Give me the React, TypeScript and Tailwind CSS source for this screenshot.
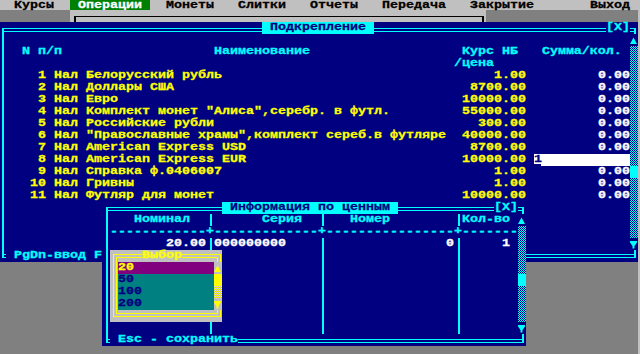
import React from 'react';

type Col = 'K' | 'N' | 'C' | 'Y' | 'W' | 'G' | 'D' | 'E' | 'P' | 'T';
type Cell = { ch: string; fg: Col; bg: Col; h?: number; cur?: boolean };

const FG: Record<Col, string> = {
  K: 'text-[#000000]',
  N: 'text-[#000080]',
  C: 'text-[#00ffff]',
  Y: 'text-[#ffff00]',
  W: 'text-[#ffffff]',
  G: 'text-[#c0c0c0]',
  D: 'text-[#808080]',
  E: 'text-[#008000]',
  P: 'text-[#800080]',
  T: 'text-[#008080]',
};
const BG: Record<Col, string> = {
  K: 'bg-[#000000]',
  N: 'bg-[#000080]',
  C: 'bg-[#00ffff]',
  Y: 'bg-[#ffff00]',
  W: 'bg-[#ffffff]',
  G: 'bg-[#c0c0c0]',
  D: 'bg-[#808080]',
  E: 'bg-[#008000]',
  P: 'bg-[#800080]',
  T: 'bg-[#008080]',
};
const FILL: Partial<Record<Col, string>> = { C: 'fill-[#00ffff]', Y: 'fill-[#ffff00]' };
const CHK: Partial<Record<Col, string>> = {
  C: 'bg-[image:repeating-conic-gradient(#00ffff_0_25%,#000080_0_50%)] bg-[length:2px_2px]',
  Y: 'bg-[image:repeating-conic-gradient(#ffff00_0_25%,#c0c0c0_0_50%)] bg-[length:2px_2px]',
};
const HL: Record<number, [string, string]> = {
  3: ['top-[3px]', 'top-[6px]'],
  4: ['top-[4px]', 'top-[7px]'],
  5: ['top-[5px]', 'top-[8px]'],
  6: ['top-[6px]', 'top-[9px]'],
};
const VDOWN: Record<number, string> = {
  3: 'top-[3px] bottom-0',
  4: 'top-[4px] bottom-0',
  5: 'top-[5px] bottom-0',
  6: 'top-[6px] bottom-0',
  7: 'top-[7px] bottom-0',
  8: 'top-[8px] bottom-0',
  9: 'top-[9px] bottom-0',
};
const VUP: Record<number, string> = {
  4: 'top-0 h-[4px]',
  5: 'top-0 h-[5px]',
  6: 'top-0 h-[6px]',
  7: 'top-0 h-[7px]',
  8: 'top-0 h-[8px]',
  9: 'top-0 h-[9px]',
  10: 'top-0 h-[10px]',
};

const BOX = new Set(['═', '│', '╒', '╕', '╘', '╛', '┌', '┐', '─', '╔', '╗', '╚', '╝', '║', '▲', '▼', '▒', '█']);

const COLS = 80;
const ROWS = 30;

const ITEMS: [string, string][] = [
  ['Белорусский рубль', '1.00'],
  ['Доллары США', '8700.00'],
  ['Евро', '10000.00'],
  ['Комплект монет "Алиса",серебр. в футл.', '55000.00'],
  ['Российские рубли', '300.00'],
  ['"Православные храмы",комплект сереб.в футляре', '40000.00'],
  ['American Express USD', '8700.00'],
  ['American Express EUR', '10000.00'],
  ['Справка ф.0406007', '1.00'],
  ['Гривны', '1.00'],
  ['Футляр для монет', '10000.00'],
];

function build(): Cell[][] {
  const s: Cell[][] = Array.from({ length: ROWS }, () =>
    Array.from({ length: COLS }, () => ({ ch: ' ', fg: 'K' as Col, bg: 'D' as Col }))
  );
  const put = (r: number, c: number, text: string, fg: Col, bg: Col, h?: number) => {
    Array.from(text).forEach((ch, i) => {
      if (c + i < COLS) s[r][c + i] = { ch, fg, bg, h };
    });
  };
  const rep = (r: number, c0: number, c1: number, ch: string, fg: Col, bg: Col, h?: number) => {
    for (let c = c0; c <= c1; c++) s[r][c] = { ch, fg, bg, h };
  };
  const box = (r0: number, c0: number, r1: number, c1: number, fg: Col, bg: Col) => {
    for (let r = r0; r <= r1; r++) for (let c = c0; c <= c1; c++) s[r][c] = { ch: ' ', fg, bg };
  };

  // menu bar
  rep(0, 0, 79, ' ', 'K', 'G');
  put(0, 2, 'Курсы', 'K', 'G');
  put(0, 9, ' Операции ', 'W', 'E');
  put(0, 21, 'Монеты', 'K', 'G');
  put(0, 30, 'Слитки', 'K', 'G');
  put(0, 39, 'Отчеты', 'K', 'G');
  put(0, 48, 'Передача', 'K', 'G');
  put(0, 59, 'Закрытие', 'K', 'G');
  put(0, 74, 'Выход', 'K', 'G');

  // window behind (top edge only)
  rep(1, 9, 9, '┌', 'K', 'G', 6);
  rep(1, 10, 59, '─', 'K', 'G', 6);
  rep(1, 60, 60, '┐', 'K', 'G', 6);

  // main window
  box(2, 0, 21, 79, 'C', 'N');
  rep(2, 0, 0, '╒', 'C', 'N', 6);
  rep(2, 1, 78, '═', 'C', 'N', 6);
  rep(2, 79, 79, '╕', 'C', 'N', 6);
  put(2, 33, ' Подкрепление ', 'N', 'C');
  put(2, 76, '[X]', 'C', 'N');
  for (let r = 3; r <= 20; r++) {
    rep(r, 0, 0, '│', 'C', 'N');
    const ch = r === 3 ? '▲' : r === 20 ? '▼' : r === 14 ? '█' : '▒';
    rep(r, 79, 79, ch, 'C', 'N');
  }
  put(4, 3, 'N п/п', 'C', 'N');
  put(4, 27, 'Наименование', 'C', 'N');
  put(4, 58, 'Курс НБ', 'C', 'N');
  put(4, 68, 'Сумма/кол.', 'C', 'N');
  put(5, 57, '/цена', 'C', 'N');
  ITEMS.forEach(([name, rate], i) => {
    const r = 6 + i;
    put(r, 4, String(i + 1).padStart(2, ' '), 'Y', 'N');
    put(r, 7, 'Нал', 'Y', 'N');
    put(r, 11, name, 'Y', 'N');
    put(r, 66 - rate.length, rate, 'Y', 'N');
    if (i === 7) {
      rep(r, 67, 78, ' ', 'N', 'W');
      s[r][67] = { ch: '1', fg: 'N', bg: 'W', cur: true };
    } else {
      put(r, 75, '0.00', 'W', 'N');
    }
  });
  rep(21, 0, 0, '╘', 'C', 'N', 4);
  rep(21, 1, 78, '═', 'C', 'N', 4);
  rep(21, 79, 79, '╛', 'C', 'N', 4);
  put(21, 1, ' PgDn-ввод F', 'C', 'N');

  // info window
  box(17, 13, 28, 65, 'C', 'N');
  rep(17, 13, 13, '╒', 'C', 'N', 5);
  rep(17, 14, 64, '═', 'C', 'N', 5);
  rep(17, 65, 65, '╕', 'C', 'N', 5);
  put(17, 28, ' Информация по ценным ', 'N', 'C');
  put(17, 62, '[X]', 'C', 'N');
  for (let r = 18; r <= 27; r++) {
    rep(r, 13, 13, '│', 'C', 'N');
    [26, 40, 57].forEach((c) => rep(r, c, c, '│', 'C', 'N'));
    const ch = r === 18 ? '▲' : r === 27 ? '▼' : r === 23 ? '█' : '▒';
    rep(r, 65, 65, ch, 'C', 'N');
  }
  put(18, 17, 'Номинал', 'C', 'N');
  put(18, 33, 'Серия', 'C', 'N');
  put(18, 44, 'Номер', 'C', 'N');
  put(18, 58, 'Кол-во', 'C', 'N');
  rep(19, 14, 64, '-', 'C', 'N');
  [26, 40, 57].forEach((c) => rep(19, c, c, '+', 'C', 'N'));
  put(20, 21, '20.00', 'W', 'N');
  put(20, 27, '000000000', 'W', 'N');
  put(20, 56, '0', 'W', 'N');
  put(20, 63, '1', 'W', 'N');
  rep(28, 13, 13, '╘', 'C', 'N', 5);
  rep(28, 14, 64, '═', 'C', 'N', 5);
  rep(28, 65, 65, '╛', 'C', 'N', 5);
  put(28, 14, ' Esc - сохранить', 'C', 'N');

  // choice popup
  box(21, 14, 26, 27, 'Y', 'G');
  rep(21, 14, 14, '╔', 'Y', 'G', 4);
  rep(21, 15, 26, '═', 'Y', 'G', 4);
  rep(21, 27, 27, '╗', 'Y', 'G', 4);
  put(21, 18, 'Выбор', 'Y', 'G');
  for (let r = 22; r <= 25; r++) rep(r, 14, 14, '║', 'Y', 'G');
  rep(22, 15, 26, ' ', 'Y', 'P');
  put(22, 15, '20', 'Y', 'P');
  ['50', '100', '200'].forEach((t, i) => {
    rep(23 + i, 15, 26, ' ', 'N', 'T');
    put(23 + i, 15, t, 'N', 'T');
  });
  rep(22, 27, 27, '▲', 'Y', 'G');
  rep(23, 27, 27, '█', 'Y', 'G');
  rep(24, 27, 27, '▒', 'Y', 'G');
  rep(25, 27, 27, '▼', 'Y', 'G');
  rep(26, 14, 14, '╚', 'Y', 'G', 3);
  rep(26, 15, 26, '═', 'Y', 'G', 3);
  rep(26, 27, 27, '╝', 'Y', 'G', 3);

  return s;
}

function Glyphs({ text, fg, first }: { text: string; fg: Col; first: boolean }) {
  return (
    <span
      className={`inline-block leading-[12px] whitespace-pre origin-top-left scale-y-[0.79] [-webkit-text-stroke-width:0.35px] ${
        first ? 'translate-y-[3.2px]' : 'translate-y-[1.2px]'
      } ${FG[fg]}`}
    >
      {text}
    </span>
  );
}

function Deco({ c, first }: { c: Cell; first: boolean }) {
  const h = c.h ?? 5;
  const col = BG[c.fg];
  const L = (cls: string, k: number) => <i key={k} className={`absolute block ${cls} ${col}`} />;
  const [t1, t2] = HL[h] ?? HL[5];
  let parts: React.ReactNode[] = [];
  let extra = '';

  if (c.cur) {
    return (
      <span className={`relative inline-block w-2 h-3 leading-[12px] shrink-0 ${BG[c.bg]}`}>
        <Glyphs text={c.ch} fg={c.fg} first={first} />
        <i className="absolute block left-0 top-[10px] w-[7px] h-[2px] bg-[#000080]" />
      </span>
    );
  }

  switch (c.ch) {
    case '═':
      parts = [L(`left-0 right-0 h-px ${t1}`, 1), L(`left-0 right-0 h-px ${t2}`, 2)];
      break;
    case '─':
      parts = [L(`left-0 right-0 h-px ${t1}`, 1)];
      break;
    case '│':
      parts = [L('left-[4px] w-[2px] top-0 bottom-0', 1)];
      break;
    case '╒':
      parts = [
        L(`left-[4px] right-0 h-px ${t1}`, 1),
        L(`left-[4px] right-0 h-px ${t2}`, 2),
        L(`left-[4px] w-[2px] ${VDOWN[h]}`, 3),
      ];
      break;
    case '╕':
      parts = [
        L(`left-0 w-[6px] h-px ${t1}`, 1),
        L(`left-0 w-[6px] h-px ${t2}`, 2),
        L(`left-[4px] w-[2px] ${VDOWN[h]}`, 3),
      ];
      break;
    case '╘':
      parts = [
        L(`left-[4px] right-0 h-px ${t1}`, 1),
        L(`left-[4px] right-0 h-px ${t2}`, 2),
        L(`left-[4px] w-[2px] ${VUP[h + 4]}`, 3),
      ];
      break;
    case '╛':
      parts = [
        L(`left-0 w-[6px] h-px ${t1}`, 1),
        L(`left-0 w-[6px] h-px ${t2}`, 2),
        L(`left-[4px] w-[2px] ${VUP[h + 4]}`, 3),
      ];
      break;
    case '┌':
      parts = [L(`left-[4px] right-0 h-px ${t1}`, 1), L(`left-[4px] w-[2px] ${VDOWN[h]}`, 2)];
      break;
    case '┐':
      parts = [L(`left-0 w-[6px] h-px ${t1}`, 1), L(`left-[4px] w-[2px] ${VDOWN[h]}`, 2)];
      break;
    case '║':
      parts = [L('left-[3px] w-px top-0 bottom-0', 1), L('left-[6px] w-px top-0 bottom-0', 2)];
      break;
    case '╔':
      parts = [
        L(`left-[3px] right-0 h-px ${t1}`, 1),
        L(`left-[3px] w-px ${VDOWN[h]}`, 2),
        L(`left-[6px] right-0 h-px ${t2}`, 3),
        L(`left-[6px] w-px ${VDOWN[h + 3]}`, 4),
      ];
      break;
    case '╗':
      parts = [
        L(`left-0 w-[7px] h-px ${t1}`, 1),
        L(`left-[6px] w-px ${VDOWN[h]}`, 2),
        L(`left-0 w-[4px] h-px ${t2}`, 3),
        L(`left-[3px] w-px ${VDOWN[h + 3]}`, 4),
      ];
      break;
    case '╚':
      parts = [
        L(`left-[3px] w-px ${VUP[h + 4]}`, 1),
        L(`left-[3px] right-0 h-px ${t2}`, 2),
        L(`left-[6px] w-px ${VUP[h + 1]}`, 3),
        L(`left-[6px] right-0 h-px ${t1}`, 4),
      ];
      break;
    case '╝':
      parts = [
        L(`left-[6px] w-px ${VUP[h + 4]}`, 1),
        L(`left-0 w-[7px] h-px ${t2}`, 2),
        L(`left-[3px] w-px ${VUP[h + 1]}`, 3),
        L(`left-0 w-[4px] h-px ${t1}`, 4),
      ];
      break;
    case '▲':
      parts = [
        <svg key={1} viewBox="0 0 8 12" className="absolute inset-0 w-2 h-3">
          <polygon points="3.5,3.5 7,10 0,10" className={FILL[c.fg]} />
        </svg>,
      ];
      break;
    case '▼':
      parts = [
        <svg key={1} viewBox="0 0 8 12" className="absolute inset-0 w-2 h-3">
          <polygon points="0,3 7,3 7,4.5 4.5,8 4.5,10.5 2.5,10.5 2.5,8 0,4.5" className={FILL[c.fg]} />
        </svg>,
      ];
      break;
    case '▒':
      extra = CHK[c.fg] ?? '';
      break;
    case '█':
      extra = BG[c.fg];
      break;
  }
  const bgc = c.ch === '█' || c.ch === '▒' ? '' : BG[c.bg];
  return <span className={`relative inline-block w-2 h-3 shrink-0 ${bgc} ${extra}`}>{parts}</span>;
}

function Spacer({ n, bg }: { n: number; bg: Col }) {
  return <span className={`inline-block h-3 shrink-0 ${BG[bg]}`} style={{ width: n * 8 }} />;
}

function Row({ cells, first }: { cells: Cell[]; first: boolean }) {
  const out: React.ReactNode[] = [];
  let i = 0;
  while (i < cells.length) {
    const c = cells[i];
    if (BOX.has(c.ch) || c.cur) {
      out.push(<Deco key={i} c={c} first={first} />);
      i++;
      continue;
    }
    let j = i;
    let txt = '';
    while (
      j < cells.length &&
      !BOX.has(cells[j].ch) &&
      !cells[j].cur &&
      cells[j].fg === c.fg &&
      cells[j].bg === c.bg
    ) {
      txt += cells[j].ch;
      j++;
    }
    const core = txt.trim();
    if (core === '') {
      out.push(<Spacer key={i} n={txt.length} bg={c.bg} />);
    } else {
      const lead = txt.length - txt.trimStart().length;
      const trail = txt.length - txt.trimEnd().length;
      if (lead > 0) out.push(<Spacer key={`${i}l`} n={lead} bg={c.bg} />);
      out.push(
        <span key={i} className={`inline-block h-3 leading-[12px] shrink-0 ${BG[c.bg]}`}>
          <Glyphs text={core} fg={c.fg} first={first} />
        </span>
      );
      if (trail > 0) out.push(<Spacer key={`${i}t`} n={trail} bg={c.bg} />);
    }
    i = j;
  }
  return <div className="flex h-3 shrink-0">{out}</div>;
}

export default function App() {
  const screen = build();
  return (
    <div className="w-[640px] h-[354px] overflow-hidden bg-[#c0c0c0]">
      <div className="-ml-[2px] -mt-[2px] flex flex-col w-[640px] font-['Liberation_Mono',monospace] text-[13.33px] font-bold tracking-normal">
        {screen.map((cells, r) => (
          <Row key={r} cells={cells} first={r === 0} />
        ))}
      </div>
    </div>
  );
}
